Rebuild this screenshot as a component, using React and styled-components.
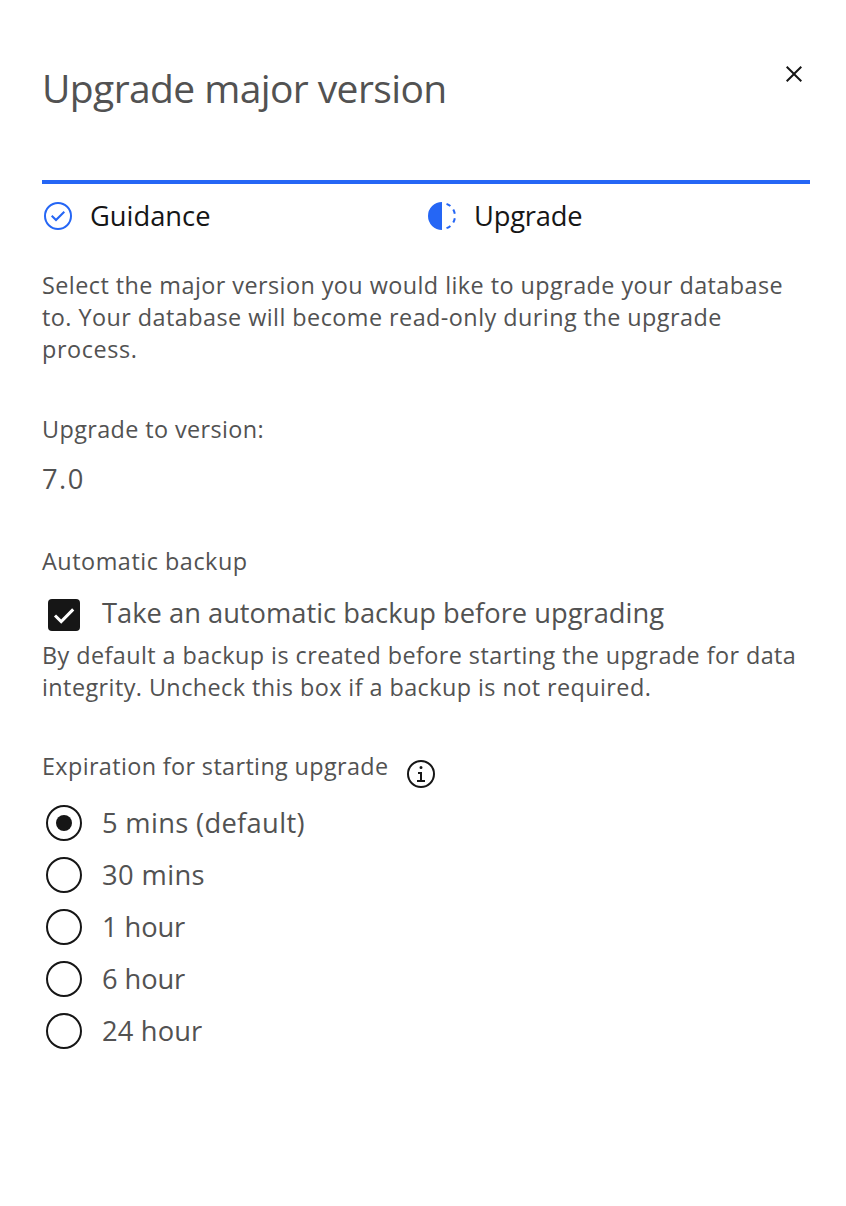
import React, { useState } from "react";
import styled, { createGlobalStyle } from "styled-components";

const GlobalStyle = createGlobalStyle`
  * { box-sizing: border-box; }
  body { margin: 0; background: #fff; }
`;

const Panel = styled.main`
  width: 846px;
  height: 1206px;
  padding: 58px 36px 0 42px;
  background: #fff;
  color: #525252;
  font-family: "Open Sans", "Noto Sans", sans-serif;
`;

const Header = styled.header`
  display: flex;
  justify-content: space-between;
  align-items: flex-start;
  height: 122px;
`;

const Title = styled.h1`
  margin: 5px 0 0;
  font-size: 39px;
  font-weight: 400;
  line-height: 50px;
  letter-spacing: ${(p) => p.$track}px;
`;

const CloseButton = styled.button`
  display: flex;
  padding: 0;
  border: 0;
  background: none;
  color: #161616;
`;

const Icon = styled.svg`
  display: block;
  flex: none;
  width: 32px;
  height: 32px;
  fill: currentColor;
`;

const Steps = styled.ol`
  display: grid;
  grid-template-columns: 1fr 1fr;
  width: 768px;
  height: 89px;
  margin: 0;
  padding: 16px 0 0;
  border-top: 4px solid #2566f5;
  list-style: none;
`;

const Step = styled.li`
  display: flex;
  align-items: center;
  gap: 16px;
  height: 32px;
  color: #2566f5;
`;

const StepLabel = styled.span`
  color: #161616;
  font-size: 27.3px;
  line-height: 32px;
  letter-spacing: ${(p) => p.$track}px;
`;

const Copy = styled.p`
  margin: 0 0 ${(p) => p.$after || 0}px;
`;

const Line = styled.span`
  display: block;
  white-space: nowrap;
  font-size: 23.4px;
  line-height: 32px;
  letter-spacing: ${(p) => p.$track}px;
`;

const Value = styled.div`
  margin: 16px 0 48px;
  height: 36px;
  font-size: 27.3px;
  line-height: 36px;
  letter-spacing: ${(p) => p.$track}px;
`;

const Choice = styled.label`
  display: flex;
  align-items: center;
  gap: ${(p) => p.$gap}px;
  height: ${(p) => p.$height}px;
  margin-bottom: ${(p) => p.$after || 0}px;
  padding-left: ${(p) => p.$inset}px;
`;

const ChoiceText = styled.span`
  white-space: nowrap;
  font-size: 27.3px;
  line-height: 36px;
  letter-spacing: ${(p) => p.$track}px;
`;

const Checkbox = styled.input`
  position: absolute;
  opacity: 0;
`;

const Box = styled.svg`
  flex: none;
  width: 32px;
  height: 32px;
  margin-top: 3px;
  border-radius: 4px;
  background: #161616;
`;

const GroupHeading = styled.div`
  display: flex;
  align-items: flex-start;
  height: 47px;
  color: #525252;
`;

const InfoButton = styled.button`
  display: flex;
  margin: 8px 0 0 auto;
  padding: 0;
  border: 0;
  background: none;
  color: #161616;
`;

const HeadingRow = styled.div`
  display: flex;
  width: 395px;
`;

const Radio = styled.input`
  appearance: none;
  display: grid;
  place-content: center;
  flex: none;
  width: 36px;
  height: 36px;
  margin: 0;
  border: 2px solid #161616;
  border-radius: 50%;
  &:checked::before {
    content: "";
    width: 16px;
    height: 16px;
    border-radius: 50%;
    background: #161616;
  }
`;

const ring = "M16 2A14 14 0 1 0 30 16 14 14 0 0 0 16 2Zm0 26A12 12 0 1 1 28 16 12 12 0 0 1 16 28Z";

const options = [
  ["5 mins (default)", 0.33],
  ["30 mins", 0.4],
  ["1 hour", -0.1],
  ["6 hour", -0.1],
  ["24 hour", 0.15],
];

export default function App() {
  const [backup, setBackup] = useState(true);
  const [expiry, setExpiry] = useState(0);
  return (
    <Panel>
      <GlobalStyle />
      <Header>
        <Title $track={-0.6}>Upgrade major version</Title>
        <CloseButton aria-label="Close">
          <Icon viewBox="0 0 32 32">
            <path d="M24 9.4L22.6 8 16 14.6 9.4 8 8 9.4 14.6 16 8 22.6 9.4 24 16 17.4 22.6 24 24 22.6 17.4 16 24 9.4z" />
          </Icon>
        </CloseButton>
      </Header>
      <Steps>
        <Step>
          <Icon viewBox="0 0 32 32">
            <path d="M14 21.414L9 16.413 10.413 15 14 18.586 21.585 11 23 12.415 14 21.414z" />
            <path d={ring} />
          </Icon>
          <StepLabel $track={0}>Guidance</StepLabel>
        </Step>
        <Step>
          <Icon viewBox="0 0 32 32">
            <path d="M23.7642 6.8593l1.2851-1.5315A13.976 13.976 0 0 0 20.8672 2.887l-.6836 1.8776A11.9729 11.9729 0 0 1 23.7642 6.8593zM27.8096 14l1.9677-.4128A13.8888 13.8888 0 0 0 28.14 9.0457L26.4087 10A12.52 12.52 0 0 1 27.8096 14zM20.1836 27.2354l.6836 1.8776a13.976 13.976 0 0 0 4.1821-2.4408l-1.2851-1.5315A11.9729 11.9729 0 0 1 20.1836 27.2354zM26.4087 22L28.14 23a14.14 14.14 0 0 0 1.6382-4.5872L27.8096 18.0659A12.1519 12.1519 0 0 1 26.4087 22zM16 30V2a14 14 0 0 0 0 28z" />
          </Icon>
          <StepLabel $track={-0.2}>Upgrade</StepLabel>
        </Step>
      </Steps>
      <Copy $after={48}>
        <Line $track={0.44}>Select the major version you would like to upgrade your database </Line>
        <Line $track={0.45}>to. Your database will become read-only during the upgrade </Line>
        <Line $track={0.6}>process.</Line>
      </Copy>
      <Copy>
        <Line $track={0.39}>Upgrade to version:</Line>
      </Copy>
      <Value $track={1.5}>7.0</Value>
      <Copy $after={18}>
        <Line $track={0.53}>Automatic backup</Line>
      </Copy>
      <Choice $inset={6} $gap={22} $height={36} $after={8}>
        <Checkbox type="checkbox" checked={backup} onChange={() => setBackup(!backup)} />
        <Box viewBox="0 0 32 32">
          {backup && <path d="M7 16.5L13.2 22.6 25.2 10.4" fill="none" stroke="#fff" strokeWidth="3" />}
        </Box>
        <ChoiceText $track={0}>Take an automatic backup before upgrading</ChoiceText>
      </Choice>
      <Copy $after={47}>
        <Line $track={0.43}>By default a backup is created before starting the upgrade for data </Line>
        <Line $track={0.43}>integrity. Uncheck this box if a backup is not required.</Line>
      </Copy>
      <GroupHeading>
        <HeadingRow>
          <Line $track={0.37}>Expiration for starting upgrade</Line>
          <InfoButton aria-label="More information">
            <Icon viewBox="0 0 32 32">
              <path d="M17 22V14H13V16H15V22H12V24H20V22H17zM16 8a1.5 1.5 0 1 0 1.5 1.5A1.5 1.5 0 0 0 16 8z" />
              <path d={ring} />
            </Icon>
          </InfoButton>
        </HeadingRow>
      </GroupHeading>
      {options.map(([label, track], i) => (
        <Choice key={label} $inset={4} $gap={20} $height={52}>
          <Radio type="radio" name="expiry" checked={expiry === i} onChange={() => setExpiry(i)} />
          <ChoiceText $track={track}>{label}</ChoiceText>
        </Choice>
      ))}
    </Panel>
  );
}
